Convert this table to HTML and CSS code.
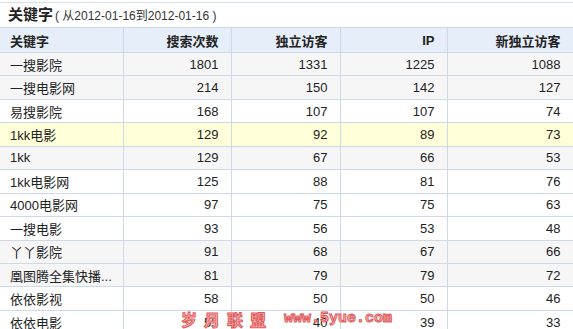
FILE: index.html
```html
<!DOCTYPE html>
<html lang="zh-CN">

<head>
  <meta charset="UTF-8">
  <title>关键字</title>
  <link rel="stylesheet" href="styles.css">
</head>

<body>
  <div class="panel">
    <div class="title">关键字<span class="range">( 从2012-01-16到2012-01-16 )</span></div>

    <table class="report">
      <colgroup>
        <col class="c-name">
        <col class="c-num">
        <col class="c-num2">
        <col class="c-ip">
        <col class="c-new">
      </colgroup>
      <thead>
        <tr>
          <th class="name">关键字</th>
          <th>搜索次数</th>
          <th>独立访客</th>
          <th>IP</th>
          <th>新独立访客</th>
        </tr>
      </thead>
      <tbody>
        <tr class="gray"><td class="name">一搜影院</td><td>1801</td><td>1331</td><td>1225</td><td>1088</td></tr>
        <tr class="gray"><td class="name">一搜电影网</td><td>214</td><td>150</td><td>142</td><td>127</td></tr>
        <tr><td class="name">易搜影院</td><td>168</td><td>107</td><td>107</td><td>74</td></tr>
        <tr class="hover"><td class="name">1kk电影</td><td>129</td><td>92</td><td>89</td><td>73</td></tr>
        <tr class="gray"><td class="name">1kk</td><td>129</td><td>67</td><td>66</td><td>53</td></tr>
        <tr><td class="name">1kk电影网</td><td>125</td><td>88</td><td>81</td><td>76</td></tr>
        <tr><td class="name">4000电影网</td><td>97</td><td>75</td><td>75</td><td>63</td></tr>
        <tr><td class="name">一搜电影</td><td>93</td><td>56</td><td>53</td><td>48</td></tr>
        <tr class="gray"><td class="name">丫丫影院</td><td>91</td><td>68</td><td>67</td><td>66</td></tr>
        <tr class="gray"><td class="name">凰图腾全集快播...</td><td>81</td><td>79</td><td>79</td><td>72</td></tr>
        <tr><td class="name">依依影视</td><td>58</td><td>50</td><td>50</td><td>46</td></tr>
        <tr><td class="name">依依电影</td><td>55</td><td>40</td><td>39</td><td>33</td></tr>
      </tbody>
    </table>

    <div class="watermark"><span class="wm-cn">岁月联盟</span><span class="wm-en">www.5yue.com</span></div>
  </div>
</body>

</html>
```

FILE: styles.css
```css
body {
  margin: 0;
  background-color: #ffffff;
  font-family: "Liberation Sans", Arial, "Noto Sans CJK SC", sans-serif;
  color: #222;
}

.panel {
  position: relative;
  width: 573px;
  height: 329px;
  overflow: hidden;
}

.title {
  margin-top: 2px;
  height: 24px;
  line-height: 24px;
  padding-left: 8px;
  border-top: 1px solid #d6e0ec;
  font-size: 15px;
  font-weight: bold;
  color: #222;
}

.range {
  font-size: 12px;
  font-weight: normal;
  color: #333;
  margin-left: 2px;
}

.report {
  width: 573px;
  border-collapse: collapse;
  table-layout: fixed;
  font-size: 13px;
}

.c-name { width: 123px; }
.c-num { width: 108px; }
.c-num2 { width: 109px; }
.c-ip { width: 107px; }
.c-new { width: 126px; }

.report th,
.report td {
  border: 1px solid #cdd9e7;
  padding: 0 12px 0 0;
  text-align: right;
  white-space: nowrap;
  overflow: hidden;
}

.report th:first-child,
.report td:first-child {
  border-left: none;
}

.report th {
  height: 24px;
  background-color: #e6eef9;
  font-weight: bold;
  color: #222;
}

.report td {
  height: 22.45px;
  color: #222;
}

.report .name {
  text-align: left;
  padding: 0 0 0 10px;
}

.report tr.gray td {
  background-color: #f6f6f7;
}

.report tr.hover td {
  background-color: #ffffd9;
}

/* marca de agua del sitio */
.watermark {
  position: absolute;
  left: 181px;
  top: 309px;
  display: flex;
  gap: 11px;
  color: #f6bcbc;
  font-weight: bold;
  -webkit-text-stroke: 1px #e05a5a;
  pointer-events: none;
}

.wm-cn {
  font-family: "Noto Sans CJK SC", sans-serif;
  font-size: 16px;
  line-height: 20px;
  letter-spacing: 7px;
}

.wm-en {
  font-family: "Liberation Mono", monospace;
  font-size: 15px;
  line-height: 20px;
}
```
